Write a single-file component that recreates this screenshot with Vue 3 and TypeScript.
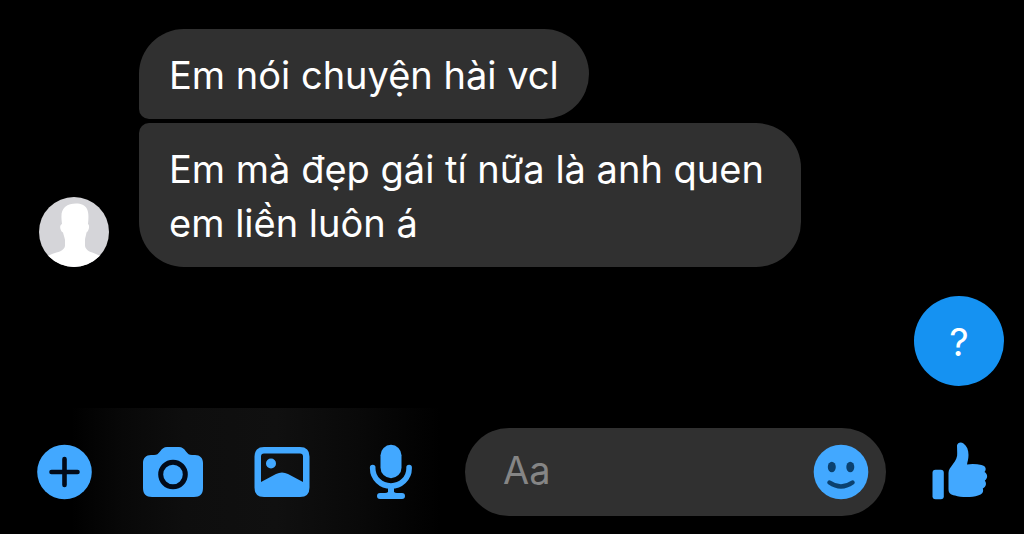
<script setup lang="ts">
import { ref } from 'vue'

interface Message {
  id: number
  text: string
}

const received: Message[] = [
  { id: 1, text: 'Em nói chuyện hài vcl' },
  { id: 2, text: 'Em mà đẹp gái tí nữa là anh quen em liền luôn á' },
]
const sent: Message[] = [{ id: 3, text: '?' }]
const draft = ref('')
</script>

<template>
  <div class="chat">
    <main class="thread">
      <section class="incoming">
        <svg class="avatar" viewBox="0 0 70 70" role="img" aria-label="Avatar">
          <defs>
            <clipPath id="avatar-clip"><circle cx="35" cy="35" r="35" /></clipPath>
          </defs>
          <g clip-path="url(#avatar-clip)">
            <rect width="70" height="70" fill="#d5d5d9" />
            <path
              fill="#fff"
              d="M23 27C22 18 22 14 26 10C29 7 33 6.500 37 6.500C42 6.500 46 8 48 12C50 16 49.500 22 49 27C51 28 50 34 47.500 35.500C47 39 46 41 46 43V49C47 54 52 55 57 57C62 59 66 62 68 66V72H2V66C4 62 8 59 13 57C19 55 25 54 26 49V43C25.500 40 24.500 38 24 35.500C21 34 20 28 23 27Z"
            />
          </g>
        </svg>
        <div class="bubbles">
          <p v-for="message in received" :key="message.id" class="bubble">{{ message.text }}</p>
        </div>
      </section>
      <section class="outgoing">
        <p v-for="message in sent" :key="message.id" class="bubble own">{{ message.text }}</p>
      </section>
    </main>

    <form class="composer" @submit.prevent>
      <div class="tools">
        <button type="button" class="icon" aria-label="More">
          <svg viewBox="0 0 60 60">
            <circle cx="30.500" cy="30" r="27.300" />
            <path class="cut" stroke-width="4.600" d="M17.500 30H43.500M30.500 17V43" />
          </svg>
        </button>
        <button type="button" class="icon" aria-label="Camera">
          <svg viewBox="0 0 60 60">
            <path
              d="M8 13H11C14 13 15 12 17 9.500C19 6.500 21 5 24 5H36C39 5 41 6.500 43 9.500C45 12 46 13 49 13H52C57 13 60 16 60 21V46C60 52 57 55 51 55H9C3 55 0 52 0 46V21C0 16 3 13 8 13Z"
            />
            <circle class="cut" cx="30" cy="32.500" r="12.300" stroke-width="5" />
          </svg>
        </button>
        <button type="button" class="icon" aria-label="Photos">
          <svg viewBox="0 0 60 60">
            <path
              fill-rule="evenodd"
              d="M12 5H48Q57.500 5 57.500 14.500V45.500Q57.500 55 48 55H12Q2.500 55 2.500 45.500V14.500Q2.500 5 12 5ZM12 11.500Q9 11.500 9 14.500V40L24 32Q30 29 36 32L51 40V14.500Q51 11.500 48 11.500Z"
            />
            <circle cx="19" cy="21.500" r="5" />
          </svg>
        </button>
        <button type="button" class="icon" aria-label="Voice message">
          <svg viewBox="0 0 60 60">
            <rect x="19.500" y="2.800" width="21" height="33.400" rx="10.500" />
            <path class="line" stroke-width="5.600" d="M11.700 25.500V26.500A18.200 17.500 0 0 0 48.100 26.500V25.500" />
            <path d="M27 44H33V50Q34 51 36 51H41Q44 51 44 54T41 57H19Q16 57 16 54T19 51H24Q26 51 27 50Z" />
          </svg>
        </button>
      </div>

      <div class="field">
        <input v-model="draft" type="text" placeholder="Aa" aria-label="Message" />
        <button type="button" class="icon emoji" aria-label="Emoji">
          <svg viewBox="0 0 60 60">
            <circle cx="30" cy="30" r="27.300" />
            <ellipse class="face" cx="20.800" cy="25" rx="4" ry="5.200" />
            <ellipse class="face" cx="39.300" cy="25" rx="4" ry="5.200" />
            <path class="smile" d="M18.500 40.500Q30 48.500 41.500 40.500" />
          </svg>
        </button>
      </div>

      <button type="button" class="icon" aria-label="Like">
        <svg viewBox="0 0 60 60">
          <rect x="2.500" y="27.800" width="11.300" height="29.500" rx="3" />
          <path
            d="M27 3.500C27.500 0.500 31 -0.200 33.500 1.500C37 4 38.500 8 38.500 13C38.500 17 37.500 19.500 37 22.500C42 21.500 47 22 51.500 23C55.500 24 57 27 54.500 30C58 32 58 36.500 54.800 38.500C57 41.500 56 45 52.800 46.500C54 50 52 52.500 48 53.500C42 55.500 31 55.500 25 53.500C20.500 53 18.500 51 18.500 47V31C18.500 27.500 20.500 25.500 23 22C26 18 27.500 15 27.200 11Z"
          />
        </svg>
      </button>
    </form>
  </div>
</template>

<style>
body {
  margin: 0;
  background: #000;
}
</style>

<style scoped>
.chat {
  display: flex;
  flex-direction: column;
  min-height: 100vh;
  background: #000;
  color: #fff;
  font-family: Inter, 'Liberation Sans', sans-serif;
  font-size: 38px;
  line-height: 54px;
}

.thread {
  display: flex;
  flex: 1;
  flex-direction: column;
  gap: 29px;
  padding: 29px 20px 20px 39px;
}

.incoming {
  display: flex;
  align-items: flex-end;
  gap: 30px;
}

.avatar {
  flex: none;
  width: 70px;
  height: 70px;
}

.bubbles {
  display: flex;
  flex-direction: column;
  align-items: flex-start;
  gap: 4px;
  max-width: 662px;
}

.bubble {
  margin: 0;
  padding: 19px 30px 17px;
  border-radius: 45px;
  background: #303030;
}

.bubbles .bubble:first-child {
  border-bottom-left-radius: 10px;
}

.bubbles .bubble:last-child {
  border-top-left-radius: 10px;
}

.outgoing {
  display: flex;
  justify-content: flex-end;
}

.own {
  box-sizing: border-box;
  min-width: 90px;
  text-align: center;
  background: #1592f2;
}

.composer {
  display: flex;
  align-items: center;
  gap: 44px;
  padding: 20px 34px 18px;
  background: linear-gradient(90deg, #000 7%, #080808 12%, #0e0e0e 18%, #101010 27%, #090909 35%, #000 43%);
}

.tools {
  display: flex;
  flex: none;
  gap: 49px;
}

.icon {
  flex: none;
  width: 60px;
  height: 60px;
  padding: 0;
  border: 0;
  background: none;
  cursor: pointer;
}

.icon svg {
  display: block;
  width: 60px;
  height: 60px;
  fill: #42a8ff;
  overflow: visible;
}

.icon .cut {
  fill: none;
  stroke: #020a18;
  stroke-linecap: round;
}

.icon .line {
  fill: none;
  stroke: #42a8ff;
  stroke-linecap: round;
}

.icon .face {
  fill: #0b416f;
}

.icon .smile {
  fill: none;
  stroke: #0b416f;
  stroke-width: 4.5;
  stroke-linecap: round;
}

.field {
  display: flex;
  flex: 1;
  align-items: center;
  min-width: 0;
  height: 88px;
  padding: 0 15px 0 38px;
  box-sizing: border-box;
  border-radius: 44px;
  background: #303030;
}

.field input {
  flex: 1;
  min-width: 0;
  padding: 0 0 4px;
  border: 0;
  outline: 0;
  background: none;
  color: #fff;
  font: inherit;
}

.field input::placeholder {
  color: #858585;
  opacity: 1;
}
</style>
